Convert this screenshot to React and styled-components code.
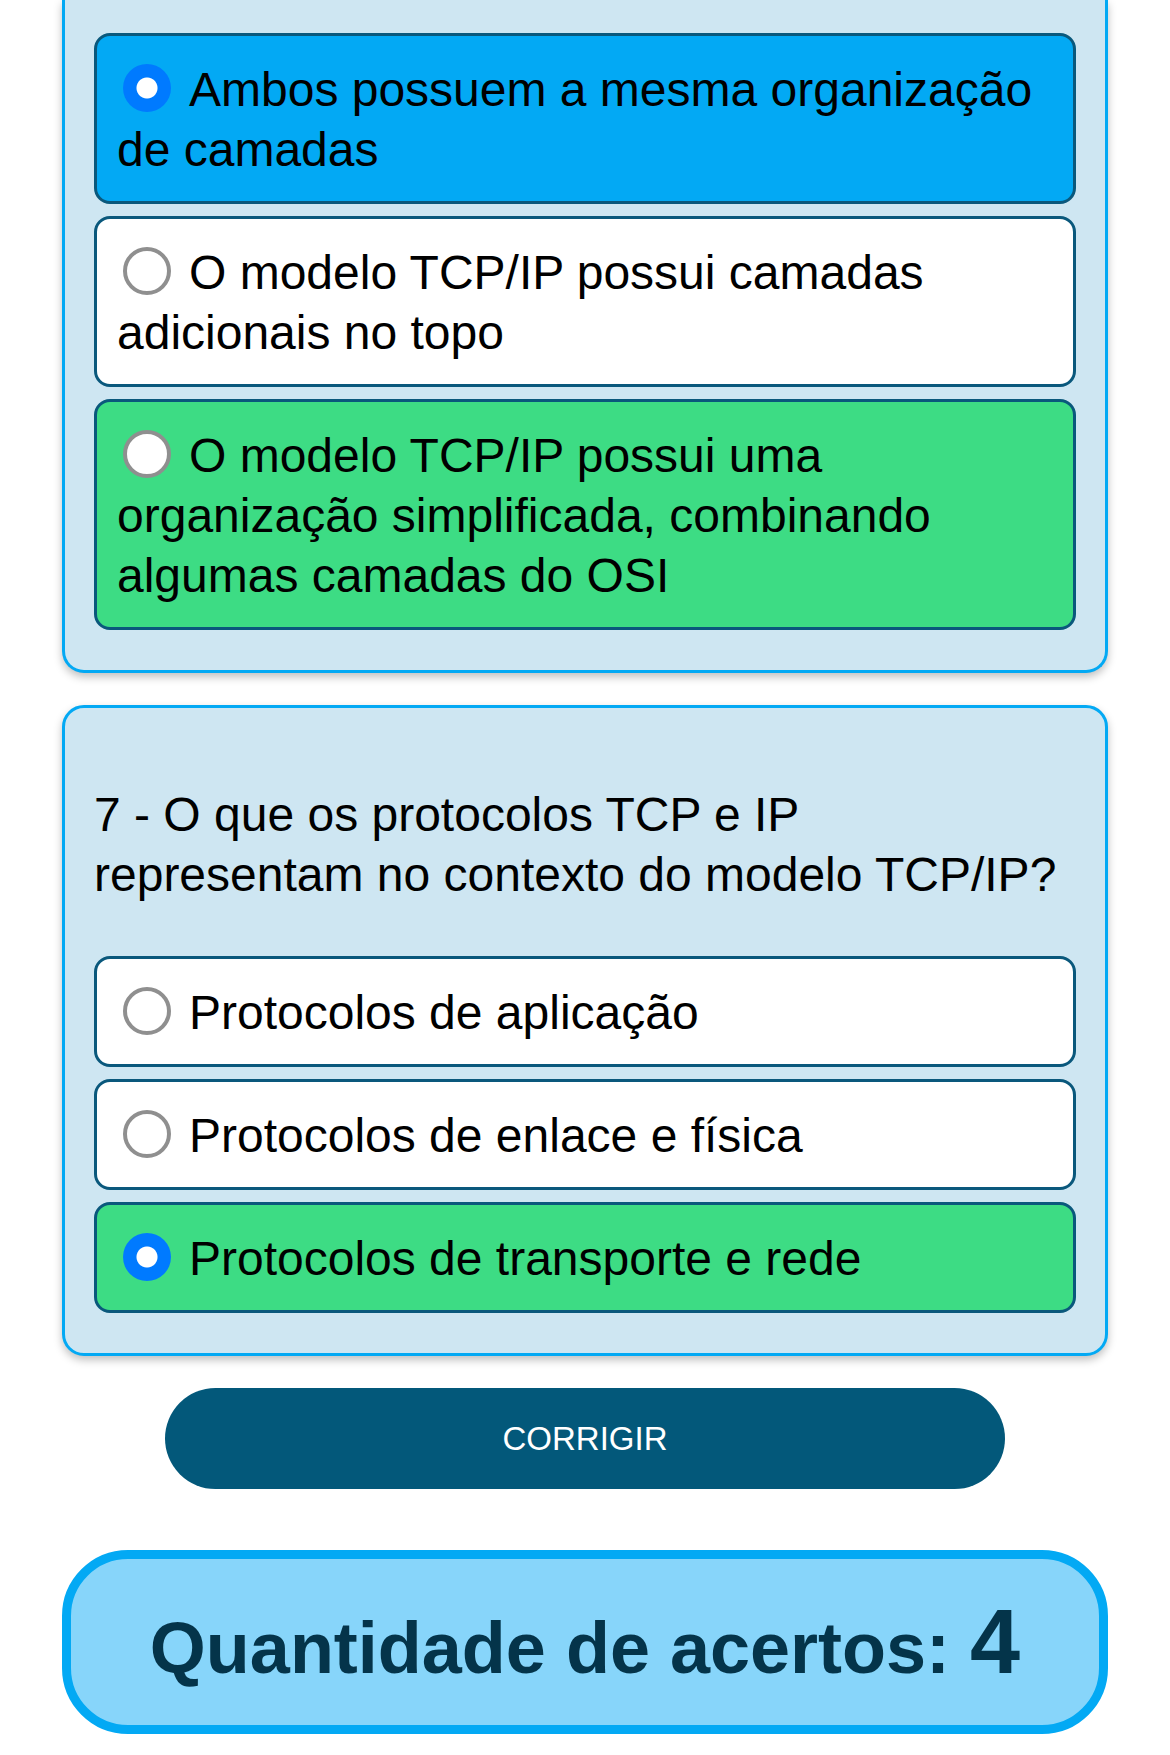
import React from "react";
import styled, { createGlobalStyle, css } from "styled-components";

const GlobalStyle = createGlobalStyle`
  html, body {
    margin: 0;
    padding: 0;
    background: #ffffff;
  }
  body {
    font-family: "Liberation Sans", Arial, sans-serif;
    color: #000;
  }
`;

const Page = styled.div`
  display: flex;
  flex-direction: column;
  padding: 0 62px 23px;
`;

const QuestionCard = styled.section`
  background: #cee6f2;
  border: 3px solid #03a9f4;
  border-radius: 22px;
  box-shadow: 0 4px 8px rgba(0, 0, 0, 0.25);
  padding: 77px 29px 40px;
  margin-bottom: 32px;
  display: flex;
  flex-direction: column;

  ${(p) =>
    p.$cut &&
    css`
      border-top: none;
      border-top-left-radius: 0;
      border-top-right-radius: 0;
      padding-top: 33px;
    `}
`;

const QuestionText = styled.p`
  margin: 0 0 51px;
  font-size: 48px;
  line-height: 60px;
`;

const OptionList = styled.div`
  display: flex;
  flex-direction: column;
  gap: 12px;
`;

const optionColors = {
  selected: "#03a9f4",
  correct: "#3ddc84",
  none: "#ffffff",
};

const Option = styled.label`
  display: block;
  background: ${(p) => optionColors[p.$state]};
  border: 3px solid #0a587c;
  border-radius: 16px;
  padding: 24px 20px 21px;
  font-size: 48px;
  line-height: 60px;
`;

const Radio = styled.input`
  appearance: none;
  -webkit-appearance: none;
  box-sizing: border-box;
  display: inline-block;
  width: 48px;
  height: 48px;
  margin: 0 18px 0 6px;
  border-radius: 50%;
  vertical-align: -6px;
  border: 4px solid #8f8f8f;
  background: #ffffff;

  &:checked {
    border: none;
    background: radial-gradient(circle, #ffffff 0 10px, #007aff 11px);
  }
`;

const CorrectButton = styled.button`
  align-self: center;
  width: 840px;
  height: 101px;
  border: none;
  border-radius: 51px;
  background: #03587a;
  color: #ffffff;
  font-family: "Liberation Sans", Arial, sans-serif;
  font-size: 33px;
  margin-bottom: 61px;
`;

const ResultBox = styled.div`
  height: 184px;
  box-sizing: border-box;
  border: 9px solid #03a9f4;
  border-radius: 66px;
  background: #87d5fa;
  display: flex;
  align-items: center;
  justify-content: center;
`;

const ResultTitle = styled.h2`
  margin: 0;
  font-size: 72px;
  line-height: 1;
  font-weight: 700;
  color: #04344a;
`;

const Score = styled.span`
  font-size: 90px;
`;

const q6 = [
  { text: "Ambos possuem a mesma organização de camadas", state: "selected", checked: true },
  { text: "O modelo TCP/IP possui camadas adicionais no topo", state: "none" },
  {
    text: "O modelo TCP/IP possui uma organização simplificada, combinando algumas camadas do OSI",
    state: "correct",
  },
];

const q7 = [
  { text: "Protocolos de aplicação", state: "none" },
  { text: "Protocolos de enlace e física", state: "none" },
  { text: "Protocolos de transporte e rede", state: "correct", checked: true },
];

const Options = ({ name, items }) => (
  <OptionList>
    {items.map((o, i) => (
      <Option key={i} $state={o.state}>
        <Radio type="radio" name={name} defaultChecked={!!o.checked} />
        {o.text}
      </Option>
    ))}
  </OptionList>
);

export default function App() {
  return (
    <>
      <GlobalStyle />
      <Page>
        <QuestionCard $cut>
          <Options name="q6" items={q6} />
        </QuestionCard>
        <QuestionCard>
          <QuestionText>
            7 - O que os protocolos TCP e IP representam no contexto do modelo TCP/IP?
          </QuestionText>
          <Options name="q7" items={q7} />
        </QuestionCard>
        <CorrectButton type="button">CORRIGIR</CorrectButton>
        <ResultBox>
          <ResultTitle>
            Quantidade de acertos: <Score>4</Score>
          </ResultTitle>
        </ResultBox>
      </Page>
    </>
  );
}
